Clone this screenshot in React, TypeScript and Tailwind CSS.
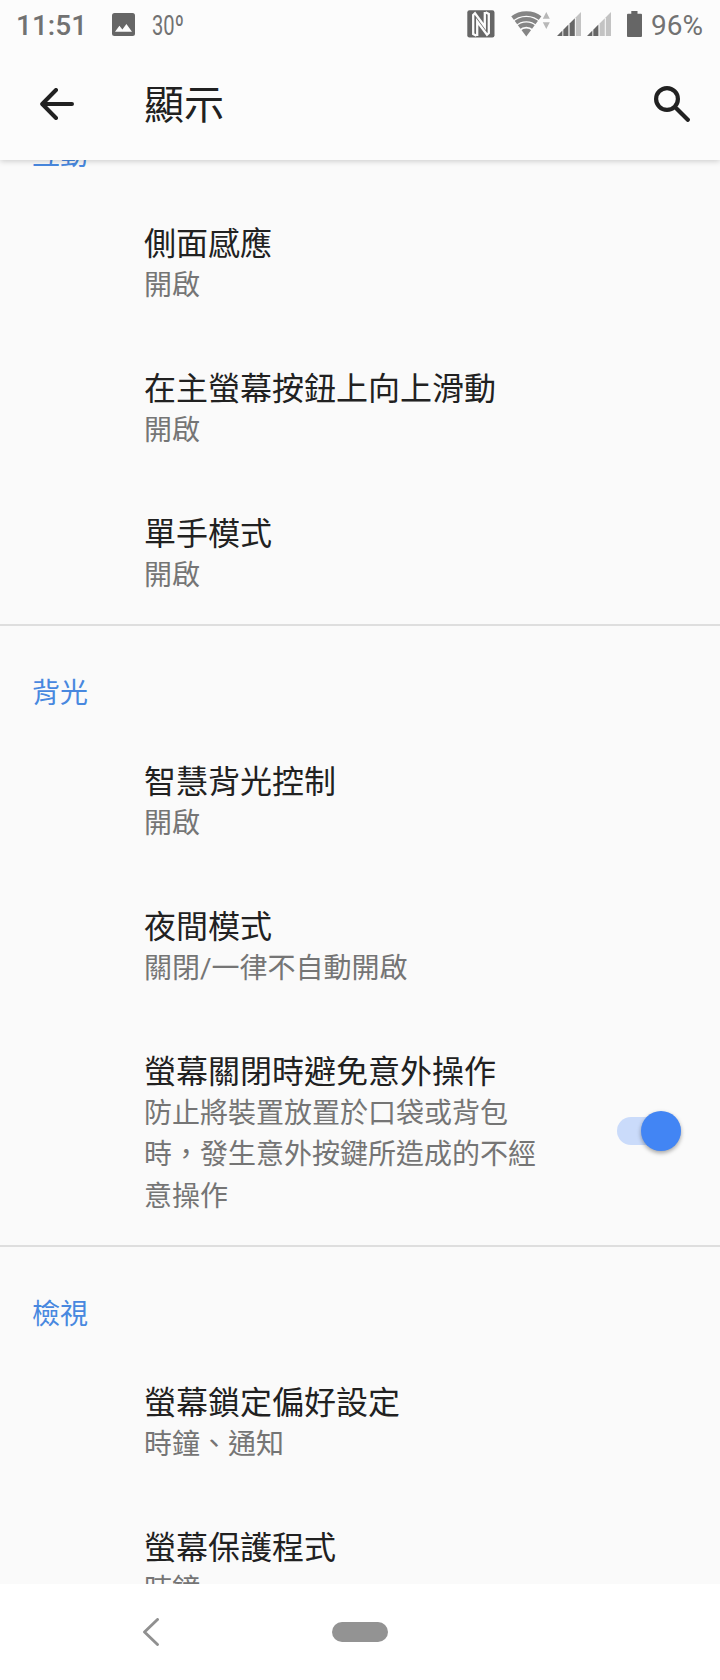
import { useState } from "react"
import type { ReactNode } from "react"

interface PreferenceProps {
  title: string
  summary: string
  children?: ReactNode
}

function NfcIcon() {
  return (
    <svg width="28" height="28" viewBox="0 0 28 28">
      <rect x="0.3" y="0.3" width="27.2" height="27.2" rx="2.2" fill="#666666" />
      <path d="M9.500 25.800L6.200 24V5L8 3.200l9.800 13.500V2" fill="none" stroke="#fcfcfc" strokeWidth="2.300" />
      <path d="M10.200 26V11.500L20 24.800l1.800-1.800V4L18.500 2.200" fill="none" stroke="#fcfcfc" strokeWidth="2.300" />
    </svg>
  )
}

function WifiIcon() {
  return (
    <svg width="39" height="26" viewBox="0 0 39 26">
      <defs>
        <clipPath id="fan">
          <path d="M15.300 25.500L0 5V-2H30.600V5z" />
        </clipPath>
      </defs>
      <g clipPath="url(#fan)" fill="none" stroke="#858585" strokeWidth="4.300">
        <circle cx="15.300" cy="25.500" r="23" />
        <circle cx="15.300" cy="25.500" r="17.400" />
        <circle cx="15.300" cy="25.500" r="11.900" />
        <circle cx="15.300" cy="25.500" r="8" fill="#858585" stroke="none" />
      </g>
      <path d="M35.300 1l3.500 6.700h-7zM35.300 18l3.500-6.700h-7z" fill="#b8b8b8" />
    </svg>
  )
}

function SignalIcon({ level }: { level: number }) {
  const bars = ["M0 24L5.4 18.6V24z", "M6.3 17.7L11.4 12.6V24H6.3z", "M12.6 11.4L17.8 6.2V24H12.6z", "M18.8 5.2L24 0V24H18.8z"]
  return (
    <svg width="24" height="24" viewBox="0 0 24 24">
      {bars.map((d, i) => (
        <path key={d} d={d} fill={i < level ? "#666666" : "#c3c3c3"} />
      ))}
    </svg>
  )
}

function StatusBar() {
  return (
    <div className="flex h-12 shrink-0 items-center text-[28px] leading-[46px] text-[#727272]">
      <span className="ml-4 w-[96px] pt-[3px] font-medium">11:51</span>
      <svg width="23" height="23" viewBox="0 0 23 23">
        <rect width="23" height="23" rx="2.5" fill="#666666" />
        <path d="M3 18.7L7.4 12.8l3 3.7 4-5.5 5.6 7.7z" fill="#fcfcfc" />
      </svg>
      <span className="ml-[17px] w-[60px] origin-left scale-x-[0.72] pt-[3px]">30º</span>
      <div className="ml-auto flex w-[253px] items-center">
        <NfcIcon />
        <div className="ml-4">
          <WifiIcon />
        </div>
        <div className="ml-[7px] flex gap-1.5">
          <SignalIcon level={3} />
          <SignalIcon level={2} />
        </div>
        <svg className="ml-4" width="15" height="26" viewBox="0 0 15 26">
          <path d="M4.3 0h6.2v2.7H14a1 1 0 0 1 1 1V25a1 1 0 0 1-1 1H1a1 1 0 0 1-1-1V3.700a1 1 0 0 1 1-1h3.300z" fill="#666666" />
        </svg>
        <span className="ml-[9px] pt-[3px]">96%</span>
      </div>
    </div>
  )
}

function Category({ children }: { children: string }) {
  return <h2 className="h-[103px] px-8 pt-[47px] text-[28px] leading-[41px] text-[#4888df]">{children}</h2>
}

function Preference({ title, summary, children }: PreferenceProps) {
  return (
    <div className="flex items-center pr-8 pl-36">
      <div className="w-[400px] pt-[32.500px] pb-[30.500px]">
        <p className="text-[32px] leading-[41px] whitespace-nowrap text-[#212121]">{title}</p>
        <p className="text-[28px] leading-[41.3px] text-[#757575]">{summary}</p>
      </div>
      {children}
    </div>
  )
}

export default function App() {
  const [blockTouch, setBlockTouch] = useState(true)

  return (
    <div className="flex h-[1680px] w-[720px] flex-col overflow-hidden bg-[#fafafa] font-['Roboto','Noto_Sans_CJK_TC',sans-serif]">
      {/* App bar */}
      <header className="z-10 h-40 shrink-0 bg-[#fcfcfc] shadow-[0_1px_6px_rgba(0,0,0,0.2)]">
        <StatusBar />
        <div className="flex h-28 items-center pr-[30px] pl-10">
          <svg width="34" height="32" viewBox="0 0 34 32" fill="none" stroke="#212121" strokeWidth="4" strokeLinecap="round" strokeLinejoin="round">
            <path d="M32 16H2.500M16 2L2.200 16l13.800 14" />
          </svg>
          <h1 className="ml-[70px] pt-[3px] text-[40px] text-[#212121]">顯示</h1>
          <svg className="ml-auto" width="36" height="36" viewBox="0 0 36 36" fill="none" stroke="#212121" strokeWidth="4.200" strokeLinecap="round">
            <circle cx="13" cy="13" r="10.900" />
            <path d="M23 23L33.800 33.800" />
          </svg>
        </div>
      </header>

      <main className="min-h-0 flex-1 overflow-hidden">
        <section className="-mt-[72px] h-[538px] border-b-2 border-[#dedede]">
          <Category>互動</Category>
          <Preference title="側面感應" summary="開啟" />
          <Preference title="在主螢幕按鈕上向上滑動" summary="開啟" />
          <Preference title="單手模式" summary="開啟" />
        </section>
        <section className="h-[621px] border-b-2 border-[#dedede]">
          <Category>背光</Category>
          <Preference title="智慧背光控制" summary="開啟" />
          <Preference title="夜間模式" summary="關閉/一律不自動開啟" />
          <Preference title="螢幕關閉時避免意外操作" summary="防止將裝置放置於口袋或背包時，發生意外按鍵所造成的不經意操作">
            <button
              role="switch"
              aria-checked={blockTouch}
              aria-label="螢幕關閉時避免意外操作"
              className={`mr-[7px] mb-[5px] ml-auto flex h-7 w-16 items-center rounded-full ${
                blockTouch ? "justify-end bg-[#cadbfa]" : "justify-start bg-gray-300"
              }`}
              onClick={() => setBlockTouch(!blockTouch)}
            >
              <span className={`h-10 w-10 rounded-full shadow-[0_2px_4px_rgba(0,0,0,0.35)] ${blockTouch ? "bg-[#4285f4]" : "bg-white"}`} />
            </button>
          </Preference>
        </section>
        <section>
          <Category>檢視</Category>
          <Preference title="螢幕鎖定偏好設定" summary="時鐘、通知" />
          <Preference title="螢幕保護程式" summary="時鐘" />
        </section>
      </main>

      {/* Navigation bar */}
      <nav className="flex h-24 shrink-0 items-center bg-white">
        <svg className="ml-[143px]" width="16" height="28" viewBox="0 0 16 28" fill="none" stroke="#909090" strokeWidth="2.900" strokeLinecap="round" strokeLinejoin="round">
          <path d="M14.500 1.500L1.500 14l13 12.500" />
        </svg>
        <div className="ml-[173px] h-5 w-14 rounded-full bg-[#939393]" />
      </nav>
    </div>
  )
}
